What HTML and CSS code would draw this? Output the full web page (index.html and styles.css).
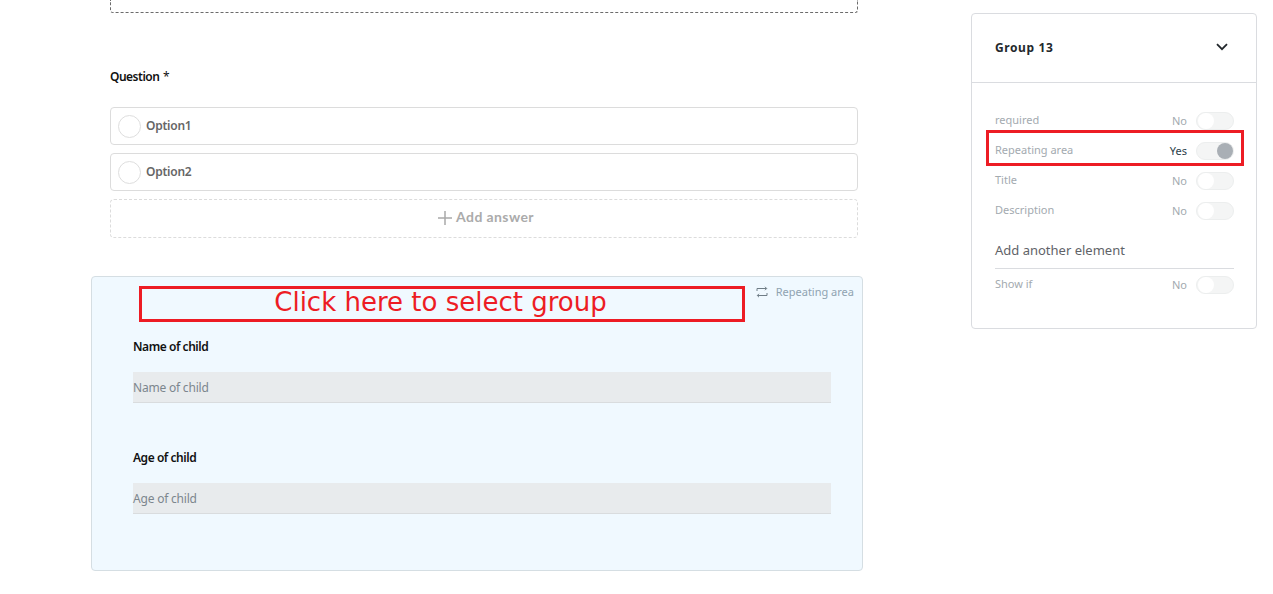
FILE: index.html
```html
<!DOCTYPE html>
<html lang="en">
<head>
<meta charset="utf-8">
<title>Group settings</title>
<link rel="stylesheet" href="styles.css">
</head>
<body>
<div class="page">
  <main class="form">
    <div class="section">
      <div class="dashed-top"></div>
      <div class="question">Question <span class="star">*</span></div>
      <div class="option"><span class="radio"></span><span>Option1</span></div>
      <div class="option"><span class="radio"></span><span>Option2</span></div>
      <div class="add-answer">
        <svg class="plus" width="14" height="14" viewBox="0 0 14 14"><path d="M7 0v14M0 7h14" stroke="#a9a9a9" stroke-width="1.5" fill="none"/></svg>
        <span>Add answer</span>
      </div>
    </div>
    <section class="group">
      <div class="repeat-tag">
        <svg width="12" height="12" viewBox="0 0 12 12" fill="none" stroke="#6f7d86" stroke-width="1"><path d="M1 5V2.500h9.500M9 .8l1.700 1.700L9 4.200M11 7v2.500H1.500M3 7.800L1.300 9.500 3 11.200"/></svg>
        <span>Repeating area</span>
      </div>
      <div class="child">
        <div class="child-label">Name of child</div>
        <div class="field">Name of child</div>
      </div>
      <div class="child">
        <div class="child-label">Age of child</div>
        <div class="field">Age of child</div>
      </div>
      <div class="callout callout-group">Click here to select group</div>
    </section>
  </main>
  <aside class="panel">
    <header class="panel-head">
      <span>Group 13</span>
      <svg width="12" height="8" viewBox="0 0 12 8" fill="none" stroke="#23282c" stroke-width="1.800"><path d="M1 1.200l5 5 5-5"/></svg>
    </header>
    <div class="panel-body">
      <div class="row"><span class="row-label">required</span><span class="row-val">No</span><span class="toggle"></span></div>
      <div class="row"><span class="row-label">Repeating area</span><span class="row-val on">Yes</span><span class="toggle toggle-on"></span></div>
      <div class="row"><span class="row-label">Title</span><span class="row-val">No</span><span class="toggle"></span></div>
      <div class="row"><span class="row-label">Description</span><span class="row-val">No</span><span class="toggle"></span></div>
      <div class="add-element">Add another element</div>
      <div class="row row-last"><span class="row-label">Show if</span><span class="row-val">No</span><span class="toggle"></span></div>
    </div>
    <div class="callout callout-row"></div>
  </aside>
</div>
</body>
</html>
```
FILE: styles.css
```css
* { box-sizing: border-box; }
html, body { margin: 0; height: 100%; overflow: hidden; background: #fff; }
body { font-family: "Noto Sans", sans-serif; font-size: 12px; }
.page { display: flex; align-items: flex-start; padding-left: 91px; }
.form { width: 772px; flex: none; }
.section { padding: 0 5px 0 19px; }
.dashed-top { height: 13px; border: 1px dashed #6b6b6b; border-top: 0; border-radius: 0 0 3px 3px; }
.question { height: 20px; margin-top: 54px; line-height: 20px; font-weight: 600; color: #111; letter-spacing: -0.5px; }
.star { font-weight: 400; margin-left: 1px; }
.option { display: flex; align-items: center; gap: 5px; height: 38px; margin-top: 8px; padding-left: 7px; border: 1px solid #dcdcdc; border-radius: 4px; font-weight: 600; color: #666; letter-spacing: -0.25px; }
.option span:last-child { margin-top: -2px; }
.question + .option { margin-top: 20px; }
.radio { width: 23px; height: 23px; border: 1px solid #dedede; border-radius: 50%; }
.add-answer { display: flex; align-items: center; justify-content: center; gap: 4px; height: 39px; margin-top: 8px; padding-left: 4px; border: 1px dashed #dcdcdc; border-radius: 4px; font-family: Lato, sans-serif; font-size: 14px; font-weight: 700; letter-spacing: 0.4px; color: #ababab; }
.add-answer span { margin-top: -5px; }
.plus { flex: none; margin-top: -2px; }
.group { position: relative; height: 295px; margin-top: 38px; padding: 60px 31px 0 41px; background: #f0f9ff; border: 1px solid #d5dee3; border-radius: 4px; }
.repeat-tag { position: absolute; top: 7px; right: 8px; display: flex; align-items: center; gap: 8px; font-size: 11px; line-height: 16px; color: #8fa3b1; }
.child { height: 111px; }
.child-label { height: 20px; line-height: 20px; font-weight: 600; color: #111; letter-spacing: -0.45px; }
.field { height: 31px; margin-top: 15px; line-height: 31px; background: #e8ebed; border-bottom: 1px solid #d9dcde; color: #7c868d; letter-spacing: -0.2px; }
.callout { position: absolute; border: 3px solid #ed1c24; }
.callout-group { left: 47px; top: 9px; width: 606px; height: 36px; display: flex; align-items: center; justify-content: center; padding: 0 3px 4px 0; font-family: "DejaVu Sans", sans-serif; font-size: 26px; color: #ed1c24; }
.panel { position: relative; width: 286px; height: 316px; flex: none; margin: 13px 0 0 108px; border: 1px solid #dadce0; border-radius: 4px; }
.panel-head { display: flex; align-items: center; justify-content: space-between; height: 69px; padding: 0 28px 2px 23px; border-bottom: 1px solid #dadce0; font-weight: 700; font-size: 12px; letter-spacing: 0.6px; color: #23282c; }
.panel-body { padding: 22px 22px 0 23px; }
.row { display: flex; align-items: center; height: 30px; color: #a3aaaf; font-size: 11px; }
.row-label { flex: 1; margin-top: -2px; }
.row-val { margin-right: 9px; margin-top: 1px; }
.row-val.on { color: #2c3e4a; }
.toggle { position: relative; width: 38px; height: 18px; margin-top: 1px; background: #f4f5f5; border: 1px solid #eceeee; border-radius: 9px; }
.toggle::after { content: ""; position: absolute; left: 1px; top: 0; width: 16px; height: 16px; border-radius: 50%; background: #fff; }
.toggle-on::after { left: 20px; background: #a9afb5; }
.add-element { height: 33px; margin-top: 11px; padding-top: 4px; line-height: 20px; font-size: 13px; color: #5f6368; border-bottom: 1px solid #dadce0; }
.row-last { margin-top: 0; }
.callout-row { left: 14px; top: 116px; width: 258px; height: 36px; }
```
